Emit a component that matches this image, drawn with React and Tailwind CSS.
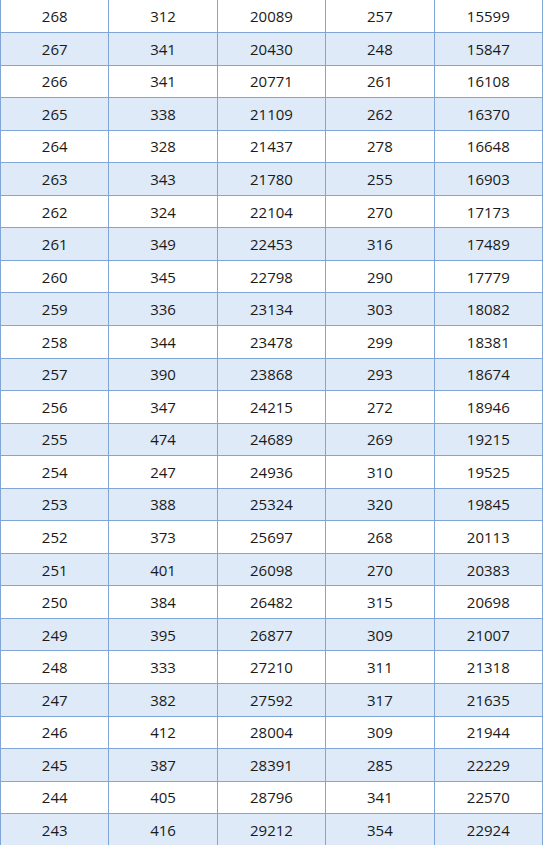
import React from 'react';

const rows = [
  [268, 312, 20089, 257, 15599],
  [267, 341, 20430, 248, 15847],
  [266, 341, 20771, 261, 16108],
  [265, 338, 21109, 262, 16370],
  [264, 328, 21437, 278, 16648],
  [263, 343, 21780, 255, 16903],
  [262, 324, 22104, 270, 17173],
  [261, 349, 22453, 316, 17489],
  [260, 345, 22798, 290, 17779],
  [259, 336, 23134, 303, 18082],
  [258, 344, 23478, 299, 18381],
  [257, 390, 23868, 293, 18674],
  [256, 347, 24215, 272, 18946],
  [255, 474, 24689, 269, 19215],
  [254, 247, 24936, 310, 19525],
  [253, 388, 25324, 320, 19845],
  [252, 373, 25697, 268, 20113],
  [251, 401, 26098, 270, 20383],
  [250, 384, 26482, 315, 20698],
  [249, 395, 26877, 309, 21007],
  [248, 333, 27210, 311, 21318],
  [247, 382, 27592, 317, 21635],
  [246, 412, 28004, 309, 21944],
  [245, 387, 28391, 285, 22229],
  [244, 405, 28796, 341, 22570],
  [243, 416, 29212, 354, 22924],
];

export default function App() {
  return (
    <div className="w-[543px] overflow-hidden bg-white" style={{ fontFamily: '"Open Sans", "Noto Sans", sans-serif' }}>
      <table className="w-[543px] table-fixed border-collapse text-[15px] leading-[20px] text-[#1a1a1a]">
        <tbody>
          {rows.map((r, i) => (
            <tr key={i} className={`h-[32.56px] ${i % 2 === 1 ? 'bg-[#deeaf8]' : 'bg-white'}`}>
              {r.map((v, j) => (
                <td
                  key={j}
                  className={`p-0 text-center border-x border-b border-[#7fa6d4] ${i === 0 ? 'border-t-0' : ''}`}
                >
                  {v}
                </td>
              ))}
            </tr>
          ))}
        </tbody>
      </table>
    </div>
  );
}
